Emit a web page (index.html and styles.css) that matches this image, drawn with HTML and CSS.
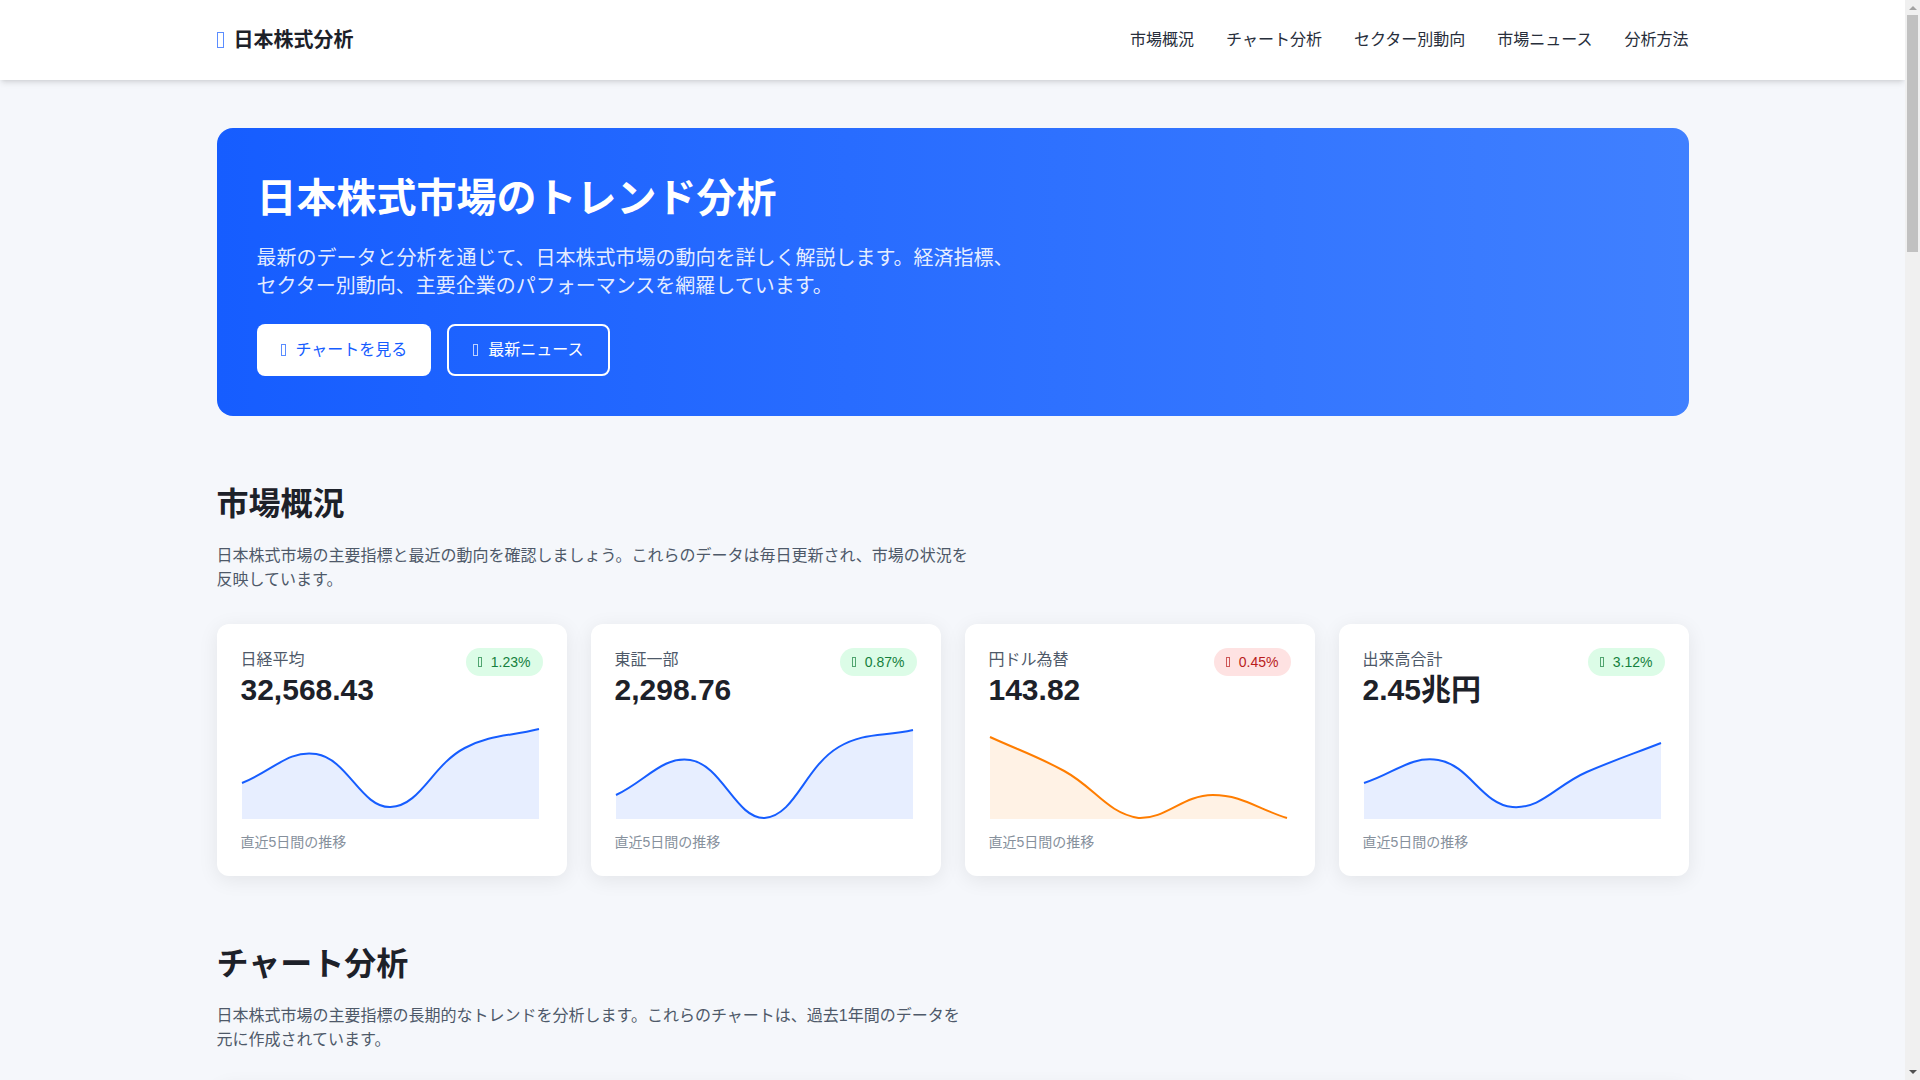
FILE: index.html
```html
<!DOCTYPE html>
<html lang="ja">
<head>
  <meta charset="UTF-8">
  <meta name="viewport" content="width=device-width, initial-scale=1.0">
  <title>日本株式分析</title>
  <link rel="stylesheet" href="styles.css">
</head>
<body>
  <!-- Header -->
  <header class="site-header">
    <div class="container header-inner">
      <a href="#" class="logo"><i class="icon"></i>日本株式分析</a>
      <nav class="main-nav">
        <a href="#overview">市場概況</a>
        <a href="#charts">チャート分析</a>
        <a href="#sectors">セクター別動向</a>
        <a href="#news">市場ニュース</a>
        <a href="#method">分析方法</a>
      </nav>
    </div>
  </header>

  <main class="container">
    <!-- Hero -->
    <section class="hero">
      <h1>日本株式市場のトレンド分析</h1>
      <p>最新のデータと分析を通じて、日本株式市場の動向を詳しく解説します。経済指標、セクター別動向、主要企業のパフォーマンスを網羅しています。</p>
      <div class="hero-actions">
        <a href="#charts" class="btn btn-light"><i class="icon"></i>チャートを見る</a>
        <a href="#news" class="btn btn-outline"><i class="icon"></i>最新ニュース</a>
      </div>
    </section>

    <!-- Market overview -->
    <section id="overview" class="section">
      <h2>市場概況</h2>
      <p class="lead">日本株式市場の主要指標と最近の動向を確認しましょう。これらのデータは毎日更新され、市場の状況を反映しています。</p>

      <div class="card-grid">
        <article class="card">
          <div class="card-head">
            <div>
              <p class="card-label">日経平均</p>
              <h3 class="card-value">32,568.43</h3>
            </div>
            <span class="badge up"><i class="icon"></i>1.23%</span>
          </div>
          <svg class="spark" viewBox="0 0 302 96" data-points="59,30,83,24,5"></svg>
          <p class="card-note">直近5日間の推移</p>
        </article>

        <article class="card">
          <div class="card-head">
            <div>
              <p class="card-label">東証一部</p>
              <h3 class="card-value">2,298.76</h3>
            </div>
            <span class="badge up"><i class="icon"></i>0.87%</span>
          </div>
          <svg class="spark" viewBox="0 0 302 96" data-points="71,36,94,23,6"></svg>
          <p class="card-note">直近5日間の推移</p>
        </article>

        <article class="card">
          <div class="card-head">
            <div>
              <p class="card-label">円ドル為替</p>
              <h3 class="card-value">143.82</h3>
            </div>
            <span class="badge down"><i class="icon"></i>0.45%</span>
          </div>
          <svg class="spark spark-orange" viewBox="0 0 302 96" data-points="13,47,94,71,94"></svg>
          <p class="card-note">直近5日間の推移</p>
        </article>

        <article class="card">
          <div class="card-head">
            <div>
              <p class="card-label">出来高合計</p>
              <h3 class="card-value">2.45兆円</h3>
            </div>
            <span class="badge up"><i class="icon"></i>3.12%</span>
          </div>
          <svg class="spark" viewBox="0 0 302 96" data-points="59,36,83,48,19"></svg>
          <p class="card-note">直近5日間の推移</p>
        </article>
      </div>
    </section>

    <!-- Chart analysis -->
    <section id="charts" class="section">
      <h2>チャート分析</h2>
      <p class="lead">日本株式市場の主要指標の長期的なトレンドを分析します。これらのチャートは、過去1年間のデータを元に作成されています。</p>
      <div class="card chart-panel"></div>
    </section>
  </main>

  <!-- Scrollbar -->
  <div class="scrollbar" aria-hidden="true">
    <span class="scroll-up"></span>
    <span class="scroll-track"><span class="scroll-thumb"></span></span>
    <span class="scroll-down"></span>
  </div>

  <script src="script.js"></script>
</body>
</html>
```
FILE: styles.css
```css
* {
  box-sizing: border-box;
  margin: 0;
  padding: 0;
}
body {
  font-family: "Liberation Sans", "Noto Sans CJK JP", sans-serif;
  font-size: 16px;
  line-height: 24px;
  background: #f5f7fb;
  color: #1d2129;
  padding-right: 15px; /* room for the scrollbar */
}
a {
  color: inherit;
  text-decoration: none;
}
.container {
  max-width: 1536px;
  margin: 0 auto;
  padding: 0 32px;
}
.icon {
  flex: none;
  width: 5px;
  height: 12px;
  margin-right: 10px;
  border: 1px solid currentColor;
  opacity: 0.7;
}

/* Header */
.site-header {
  position: sticky;
  top: 0;
  z-index: 10;
  background: #fff;
  box-shadow: 0 4px 6px -1px rgba(0, 0, 0, 0.1), 0 2px 4px -2px rgba(0, 0, 0, 0.1);
}
.header-inner {
  display: flex;
  justify-content: space-between;
  align-items: center;
  height: 80px;
}
.logo {
  display: flex;
  align-items: center;
  font-size: 20px;
  line-height: 28px;
  font-weight: bold;
}
.logo .icon {
  width: 7px;
  height: 16px;
  color: #165dff;
}
.main-nav {
  display: flex;
  gap: 32px;
  color: #272e3b;
}
.main-nav a:hover {
  color: #165dff;
}

/* Hero */
.hero {
  margin-top: 48px;
  padding: 40px;
  border-radius: 16px;
  background: linear-gradient(to right, #165dff, #4080ff);
  color: #fff;
}
.hero h1 {
  font-size: 40px;
  line-height: 60px;
  margin-bottom: 16px;
}
.hero p {
  max-width: 768px;
  font-size: 20px;
  line-height: 28px;
  margin-bottom: 24px;
  color: rgba(255, 255, 255, 0.9);
}
.hero-actions {
  display: flex;
  gap: 16px;
}
.btn {
  display: flex;
  align-items: center;
  padding: 12px 24px;
  border-radius: 8px;
}
.btn-light {
  background: #fff;
  color: #165dff;
}
.btn-outline {
  border: 2px solid #fff;
}

/* Sections */
.section {
  margin-top: 64px;
}
.section h2 {
  font-size: 32px;
  line-height: 48px;
  margin-bottom: 16px;
}
.lead {
  max-width: 756px;
  color: #4e5969;
  margin-bottom: 32px;
}

/* Cards */
.card-grid {
  display: grid;
  grid-template-columns: repeat(4, 1fr);
  gap: 24px;
}
.card {
  background: #fff;
  border-radius: 12px;
  padding: 24px;
  box-shadow: 0 4px 20px rgba(0, 0, 0, 0.08);
}
.card-head {
  display: flex;
  justify-content: space-between;
  align-items: flex-start;
  margin-bottom: 16px;
}
.card-label {
  color: #4e5969;
}
.card-value {
  font-size: 30px;
  line-height: 36px;
}
.badge {
  display: flex;
  align-items: center;
  padding: 4px 12px;
  border-radius: 14px;
  font-size: 14px;
  line-height: 20px;
}
.badge .icon {
  width: 4px;
  height: 10px;
  margin-right: 9px;
}
.badge.up {
  background: #dcfce7;
  color: #15803d;
}
.badge.down {
  background: #fee2e2;
  color: #b91c1c;
}
.card-note {
  font-size: 14px;
  line-height: 20px;
  color: #86909c;
}

/* Sparklines */
.spark {
  display: block;
  width: 100%;
  margin-bottom: 12px;
  color: #165dff;
}
.spark-orange {
  color: #ff7d00;
}
.spark .line {
  fill: none;
  stroke: currentColor;
  stroke-width: 2;
}
.spark .area {
  fill: currentColor;
  fill-opacity: 0.1;
}

.chart-panel {
  min-height: 3640px;
  margin-bottom: 64px;
}

/* Scrollbar */
.scrollbar {
  position: fixed;
  top: 0;
  right: 0;
  bottom: 0;
  z-index: 20;
  width: 15px;
  display: flex;
  flex-direction: column;
  align-items: center;
  padding: 6px 0;
  background: #f0f0f0;
}
.scroll-up,
.scroll-down {
  border: 4px solid transparent;
}
.scroll-up {
  border-top: none;
  border-bottom-color: #a3a3a3;
}
.scroll-down {
  border-bottom: none;
  border-top-color: #505050;
}
.scroll-track {
  flex: 1;
  width: 11px;
  margin: 5px 0;
}
.scroll-thumb {
  display: block;
  height: 237px;
  background: #c1c1c1;
}
```
FILE: script.js
```js
// Draw the small area charts in the cards
const SVG_NS = 'http://www.w3.org/2000/svg';
const LEFT = 1;
const RIGHT = 298;
const BOTTOM = 95;
const TENSION = 0.4;

function addPath(svg, className, d) {
  const path = document.createElementNS(SVG_NS, 'path');
  path.setAttribute('class', className);
  path.setAttribute('d', d);
  svg.appendChild(path);
}

document.querySelectorAll('.spark').forEach(svg => {
  const values = svg.dataset.points.split(',').map(Number);
  const step = (RIGHT - LEFT) / (values.length - 1);
  const pts = values.map((y, i) => ({ x: LEFT + i * step, y }));

  // Control points on both sides of every point
  const ctrl = pts.map((p, i) => {
    const prev = pts[i - 1] || p;
    const next = pts[i + 1] || p;
    const before = Math.hypot(p.x - prev.x, p.y - prev.y);
    const after = Math.hypot(next.x - p.x, next.y - p.y);
    const a = TENSION * before / (before + after);
    const b = TENSION * after / (before + after);
    return {
      inX: p.x - a * (next.x - prev.x),
      inY: Math.min(p.y - a * (next.y - prev.y), BOTTOM),
      outX: p.x + b * (next.x - prev.x),
      outY: Math.min(p.y + b * (next.y - prev.y), BOTTOM)
    };
  });

  let d = `M${pts[0].x} ${pts[0].y}`;
  for (let i = 1; i < pts.length; i++) {
    const c1 = ctrl[i - 1];
    const c2 = ctrl[i];
    d += ` C${c1.outX} ${c1.outY} ${c2.inX} ${c2.inY} ${pts[i].x} ${pts[i].y}`;
  }

  addPath(svg, 'area', `${d} V${BOTTOM} H${LEFT} Z`);
  addPath(svg, 'line', d);
});
```
